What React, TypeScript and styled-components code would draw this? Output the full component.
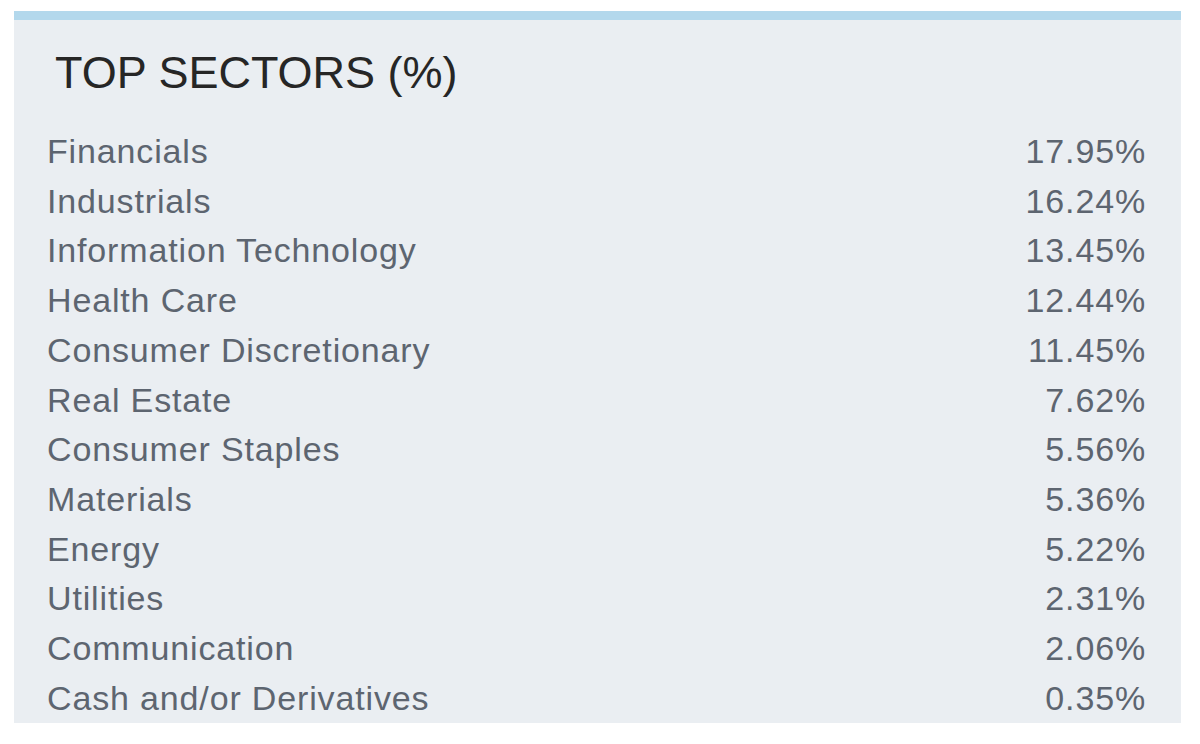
import React from "react";
import styled, { createGlobalStyle } from "styled-components";

const Global = createGlobalStyle`
  html, body { margin: 0; padding: 0; background: #ffffff; }
  body { font-family: "Liberation Sans", Arial, sans-serif; }
`;

const Page = styled.div`
  padding: 11px 19px 0 14px;
`;

const Panel = styled.section`
  background: #eaeef2;
  border-top: 9px solid #b3d8ec;
  padding: 30px 35px 0 33px;
  height: 712px;
  box-sizing: border-box;
`;

const Title = styled.h2`
  margin: 0 0 32px 8px;
  font-size: 45px;
  line-height: 45px;
  font-weight: 400;
  color: #262626;
`;

const List = styled.ul`
  list-style: none;
  margin: 0;
  padding: 0;
`;

const Row = styled.li`
  display: flex;
  justify-content: space-between;
  align-items: baseline;
  font-size: 34px;
  line-height: 49.7px;
  letter-spacing: 0.85px;
  color: #5d6570;
`;

const Label = styled.span``;
const Value = styled.span``;

const sectors: [string, string][] = [
  ["Financials", "17.95%"],
  ["Industrials", "16.24%"],
  ["Information Technology", "13.45%"],
  ["Health Care", "12.44%"],
  ["Consumer Discretionary", "11.45%"],
  ["Real Estate", "7.62%"],
  ["Consumer Staples", "5.56%"],
  ["Materials", "5.36%"],
  ["Energy", "5.22%"],
  ["Utilities", "2.31%"],
  ["Communication", "2.06%"],
  ["Cash and/or Derivatives", "0.35%"],
];

export default function App() {
  return (
    <>
      <Global />
      <Page>
        <Panel>
          <Title>TOP SECTORS (%)</Title>
          <List>
            {sectors.map(([name, val]) => (
              <Row key={name}>
                <Label>{name}</Label>
                <Value>{val}</Value>
              </Row>
            ))}
          </List>
        </Panel>
      </Page>
    </>
  );
}
